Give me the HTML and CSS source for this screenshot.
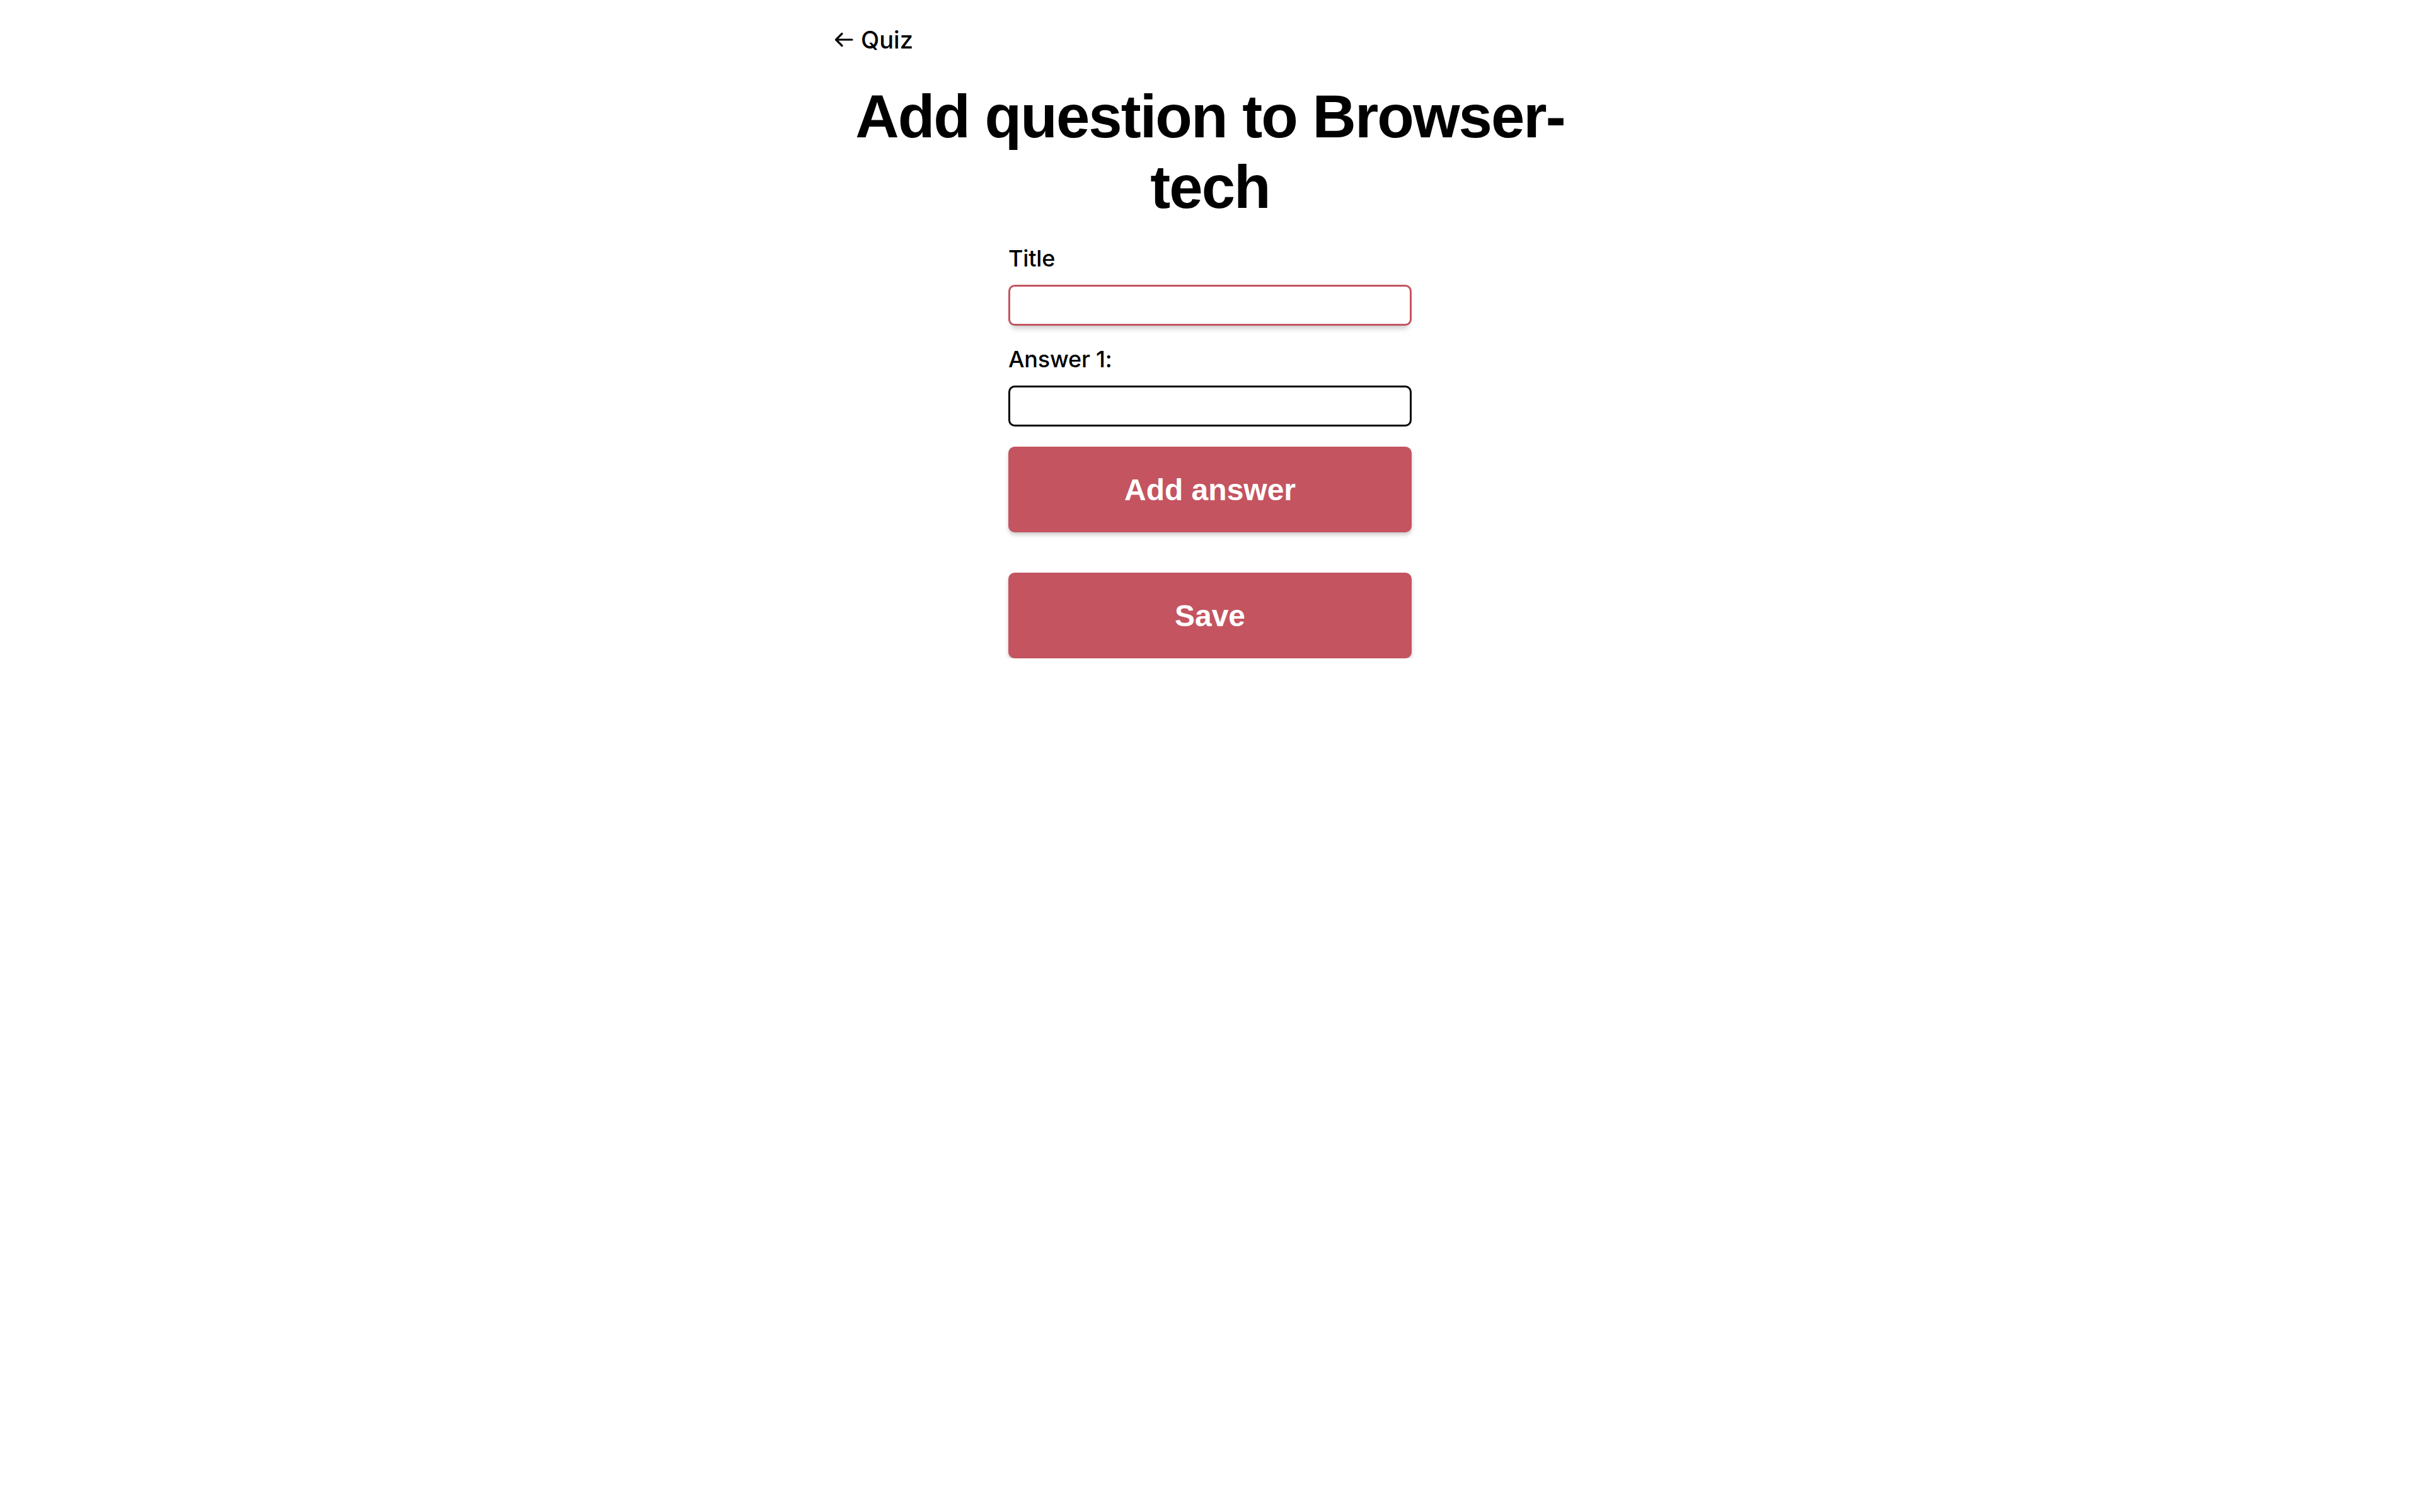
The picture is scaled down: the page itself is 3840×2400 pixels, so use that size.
FILE: index.html
```html
<!DOCTYPE html>
<html lang="en">
<head>
<meta charset="utf-8">
<title>Add question</title>
<link rel="stylesheet" href="styles.css">
</head>
<body>
<main class="page">
  <a class="back" href="#">
    <svg class="back-icon" width="32" height="26" viewBox="0 0 32 26" aria-hidden="true">
      <path d="M30 13 H5 M14 3.5 L4.5 13 L14 22.5" fill="none" stroke="#000" stroke-width="3.2" stroke-linecap="round" stroke-linejoin="round"/>
    </svg>
    <span>Quiz</span>
  </a>
  <h1 class="title">Add question to Browser-tech</h1>
  <form class="form">
    <label class="label" for="q-title">Title</label>
    <input class="field field-active" id="q-title" type="text">
    <label class="label label-next" for="a1">Answer 1:</label>
    <input class="field" id="a1" type="text">
    <button class="btn btn-add" type="button">Add answer</button>
    <button class="btn btn-save" type="submit">Save</button>
  </form>
</main>
</body>
</html>
```
FILE: styles.css
```css
html, body {
  margin: 0;
  padding: 0;
  background: #fff;
}

body {
  font-family: Inter, "Noto Sans", "Liberation Sans", sans-serif;
  color: #000;
}

.page {
  width: 1200px;
  margin: 0 auto;
  padding-top: 40px;
  display: flex;
  flex-direction: column;
}

.back {
  display: flex;
  align-items: center;
  gap: 12px;
  align-self: flex-start;
  color: #000;
  text-decoration: none;
  font-size: 38px;
  line-height: 46px;
  font-weight: 500;
}

.back-icon {
  display: block;
  margin-left: 2px;
}

.title {
  margin: 43px 0 0;
  text-align: center;
  font-family: "Liberation Sans", Arial, sans-serif;
  font-weight: 700;
  font-size: 96px;
  line-height: 112px;
  letter-spacing: -2px;
}

.form {
  width: 640px;
  margin: 34px auto 0;
  display: flex;
  flex-direction: column;
}

.label {
  font-size: 36px;
  line-height: 46px;
  font-weight: 500;
  letter-spacing: -0.2px;
  margin-bottom: 19px;
}

.label-next {
  margin-top: 30px;
}

.field {
  box-sizing: border-box;
  width: 640px;
  height: 65px;
  margin: 0;
  padding: 0 16px;
  border: 3px solid #000;
  border-radius: 10px;
  background: #fff;
  font-size: 38px;
  outline: none;
}

.field-active {
  border-color: #c45460;
  box-shadow: 0 9px 10px -5px rgba(0, 0, 0, 0.22);
}

.btn {
  box-sizing: border-box;
  width: 640px;
  height: 136px;
  margin: 0;
  border: none;
  border-radius: 10px;
  background: #c45460;
  color: #fff;
  font-family: "Liberation Sans", Arial, sans-serif;
  font-weight: 700;
  font-size: 48px;
  box-shadow: 0 4px 6px rgba(0, 0, 0, 0.2);
  cursor: pointer;
}

.btn-add {
  margin-top: 32px;
}

.btn-save {
  margin-top: 64px;
}
```
